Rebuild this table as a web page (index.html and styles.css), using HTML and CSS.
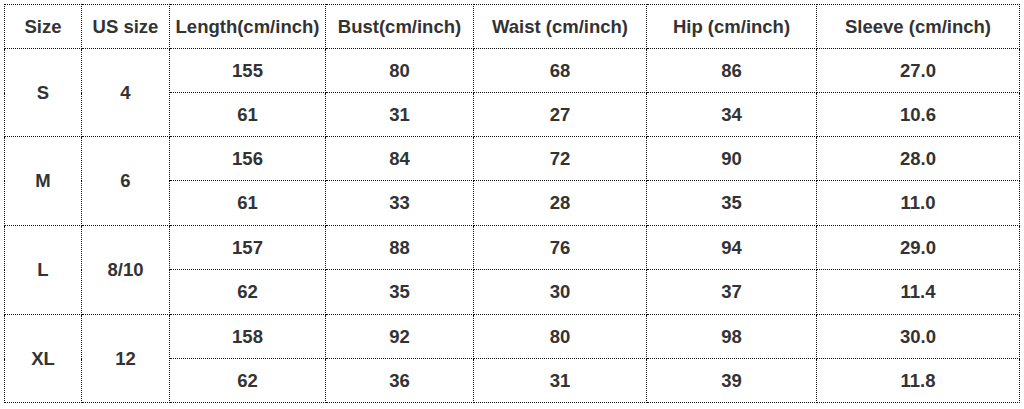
FILE: index.html
```html
<!DOCTYPE html>
<html>
<head>
<meta charset="utf-8">
<link rel="stylesheet" href="styles.css">
</head>
<body>
<table class="size-table">
  <colgroup>
    <col class="c1"><col class="c2"><col class="c3"><col class="c4"><col class="c5"><col class="c6"><col class="c7">
  </colgroup>
  <thead>
    <tr class="r-head">
      <th>Size</th><th>US size</th><th>Length(cm/inch)</th><th>Bust(cm/inch)</th><th>Waist (cm/inch)</th><th>Hip (cm/inch)</th><th>Sleeve (cm/inch)</th>
    </tr>
  </thead>
  <tbody>
    <tr class="r44"><td rowspan="2">S</td><td rowspan="2">4</td><td>155</td><td>80</td><td>68</td><td>86</td><td>27.0</td></tr>
    <tr class="r44"><td>61</td><td>31</td><td>27</td><td>34</td><td>10.6</td></tr>
    <tr class="r44"><td rowspan="2">M</td><td rowspan="2">6</td><td>156</td><td>84</td><td>72</td><td>90</td><td>28.0</td></tr>
    <tr class="r45"><td>61</td><td>33</td><td>28</td><td>35</td><td>11.0</td></tr>
    <tr class="r44"><td rowspan="2">L</td><td rowspan="2">8/10</td><td>157</td><td>88</td><td>76</td><td>94</td><td>29.0</td></tr>
    <tr class="r45"><td>62</td><td>35</td><td>30</td><td>37</td><td>11.4</td></tr>
    <tr class="r44"><td rowspan="2">XL</td><td rowspan="2">12</td><td>158</td><td>92</td><td>80</td><td>98</td><td>30.0</td></tr>
    <tr class="r44"><td>62</td><td>36</td><td>31</td><td>39</td><td>11.8</td></tr>
  </tbody>
</table>
</body>
</html>
```

FILE: styles.css
```css
html, body {
  margin: 0;
  padding: 0;
  background: #ffffff;
}
body {
  padding: 4px 0 0 4px;
}
.size-table {
  border-collapse: collapse;
  table-layout: fixed;
  width: 1015px;
  font-family: "Liberation Sans", Arial, sans-serif;
  font-weight: bold;
  font-size: 18.5px;
  color: #333333;
}
.size-table th,
.size-table td {
  border: 1px dotted #111111;
  text-align: center;
  vertical-align: middle;
  padding: 0;
  font-weight: bold;
  white-space: nowrap;
}
.c1 { width: 77px; }
.c2 { width: 88px; }
.c3 { width: 156px; }
.c4 { width: 148px; }
.c5 { width: 173px; }
.c6 { width: 170px; }
.c7 { width: 203px; }
.r-head { height: 44px; }
.r44 { height: 44px; }
.r45 { height: 45px; }
```
